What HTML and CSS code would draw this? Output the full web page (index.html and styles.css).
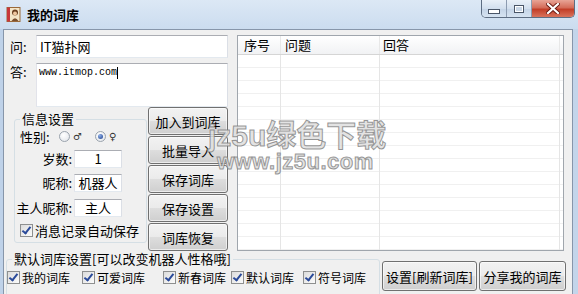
FILE: index.html
```html
<!DOCTYPE html>
<html lang="zh-CN">
<head>
    <meta charset="UTF-8">
    <title>我的词库</title>
    <link rel="stylesheet" href="styles.css">
</head>
<body>
    <div class="window">
        <div class="titlebar">
            <svg class="app-icon" width="15" height="15" viewBox="0 0 15 15">
                <rect x="1" y="0.5" width="13" height="14" fill="#f4e6c8" stroke="#9a6a3a"/>
                <rect x="1" y="0.5" width="3" height="14" fill="#c8383a"/>
                <circle cx="9" cy="5.5" r="3" fill="#6a4020"/>
                <circle cx="9" cy="6.5" r="2" fill="#f0c8a0"/>
                <path d="M5.5 14 Q9 8.5 12.5 14 Z" fill="#7a5030"/>
            </svg>
            <span class="title">我的词库</span>
            <div class="controls">
                <div class="ctl min"><span></span></div>
                <div class="ctl max"><span></span></div>
                <div class="ctl close">
                    <svg width="14" height="11" viewBox="0 0 14 11">
                        <path d="M2 1 L12 10 M12 1 L2 10" stroke="#6a1a12" stroke-width="4" stroke-linecap="square"/>
                        <path d="M2 1 L12 10 M12 1 L2 10" stroke="#fff" stroke-width="2.2" stroke-linecap="square"/>
                    </svg>
                </div>
            </div>
        </div>

        <div class="client">
            <div class="main">
                <div class="left">
                    <div class="qa-row">
                        <label>问:</label>
                        <div class="field ask">IT猫扑网</div>
                    </div>
                    <div class="qa-row answer-row">
                        <label>答:</label>
                        <div class="field answer">www.itmop.com<span class="caret"></span></div>
                    </div>
                    <div class="settings-row">
                        <fieldset class="info">
                            <legend>信息设置</legend>
                            <div class="gender">
                                <span class="gender-label">性别:</span>
                                <span class="radio"></span><span class="sex">♂</span>
                                <span class="radio checked"></span><span class="sex">♀</span>
                            </div>
                            <div class="info-row age">
                                <span class="info-label">岁数:</span>
                                <span class="value">1</span>
                            </div>
                            <div class="info-row nick">
                                <span class="info-label">昵称:</span>
                                <span class="value">机器人</span>
                            </div>
                            <div class="info-row owner">
                                <span class="info-label">主人昵称:</span>
                                <span class="value">主人</span>
                            </div>
                            <div class="check autosave"><span class="cb"></span>消息记录自动保存</div>
                        </fieldset>
                        <div class="buttons">
                            <button class="btn">加入到词库</button>
                            <button class="btn">批量导入</button>
                            <button class="btn">保存词库</button>
                            <button class="btn">保存设置</button>
                            <button class="btn">词库恢复</button>
                        </div>
                    </div>
                </div>

                <div class="list">
                    <div class="list-head">
                        <div class="col c1">序号</div>
                        <div class="col c2">问题</div>
                        <div class="col c3">回答</div>
                    </div>
                    <div class="list-body">
                        <div class="col c1"></div>
                        <div class="col c2"></div>
                        <div class="col c3"></div>
                    </div>
                </div>
            </div>

            <div class="bottom">
                <fieldset class="libs">
                    <legend>默认词库设置[可以改变机器人性格哦]</legend>
                    <div class="lib-list">
                        <div class="check"><span class="cb"></span>我的词库</div>
                        <div class="check"><span class="cb"></span>可爱词库</div>
                        <div class="check"><span class="cb"></span>新春词库</div>
                        <div class="check"><span class="cb"></span>默认词库</div>
                        <div class="check"><span class="cb"></span>符号词库</div>
                    </div>
                </fieldset>
                <button class="btn refresh">设置[刷新词库]</button>
                <button class="btn share">分享我的词库</button>
            </div>

            <!-- watermark of the download site -->
            <div class="watermark">
                <div class="wm-big">jz5u绿色下载</div>
                <div class="wm-url">www.jz5u.com</div>
            </div>
        </div>
    </div>
</body>
</html>
```

FILE: styles.css
```css
body {
    margin: 0;
    font-family: "Noto Sans CJK SC", "Liberation Sans", sans-serif;
    font-size: 12px;
    color: #000;
    background: #c5d7ec;
}
.window {
    width: 578px;
    height: 294px;
    overflow: hidden;
    display: flex;
    flex-direction: column;
    background: linear-gradient(to right, #bfd2e9, #cfdef0 60%, #c3d5ea);
}

/* Title bar */
.titlebar {
    height: 29px;
    flex-shrink: 0;
    display: flex;
    align-items: flex-start;
    background: linear-gradient(#dce8f5, #cbdcef);
}
.app-icon {
    margin: 7px 0 0 6px;
}
.title {
    margin: 7px 0 0 6px;
    font-weight: bold;
    font-size: 13px;
    line-height: 16px;
}
.controls {
    margin-left: auto;
    margin-right: 3px;
    display: flex;
    height: 17px;
    border: 1px solid #5d6d82;
    border-top: none;
    border-radius: 0 0 5px 5px;
    overflow: hidden;
}
.ctl {
    display: flex;
    align-items: center;
    justify-content: center;
    background: linear-gradient(#e9f0f8, #d2dfee 50%, #c3d3e6 51%, #d6e3f1);
    border-right: 1px solid #8c9bb0;
}
.min { width: 24px; }
.max { width: 24px; }
.min span {
    width: 10px;
    height: 3px;
    margin-top: 5px;
    background: #fff;
    border: 1px solid #4a5668;
}
.max span {
    width: 8px;
    height: 6px;
    border: 1px solid #4a5668;
    box-shadow: inset 0 0 0 1px #fff;
    background: #c9d7e7;
}
.close {
    width: 42px;
    border-right: none;
    background: linear-gradient(#e8a496, #d46c59 45%, #c23e28 55%, #d9735c);
}

/* Client area */
.client {
    flex: 1;
    margin: 0 5px 0 3px;
    padding-top: 5px;
    background: #f0f0f0;
    border: 1px solid #8796aa;
    border-bottom: none;
    position: relative;
}
.main {
    display: flex;
    height: 216px;
}
.left {
    width: 225px;
    flex-shrink: 0;
}
.qa-row {
    display: flex;
}
.qa-row label {
    width: 26px;
    padding-left: 6px;
    line-height: 23px;
    font-size: 13px;
}
.answer-row {
    margin-top: 5px;
}
.answer-row label {
    line-height: 17px;
}
.field {
    width: 192px;
    box-sizing: border-box;
    border: 1px solid #abadb3;
    border-color: #abadb3 #dbdfe6 #e3e9ef #e2e3ea;
    background: #fff;
}
.ask {
    height: 23px;
    line-height: 21px;
    padding-left: 3px;
    font-size: 13px;
}
.answer {
    height: 44px;
    padding: 3px 2px;
    font-family: "Liberation Mono", monospace;
    font-size: 10px;
    line-height: 12px;
}
.caret {
    display: inline-block;
    width: 1px;
    height: 12px;
    background: #000;
    vertical-align: top;
}

.settings-row {
    display: flex;
}
fieldset {
    margin: 0;
    padding: 0;
    border: 1px solid #d5dfe5;
    border-radius: 3px;
}
legend {
    padding: 0 2px;
    margin-left: 5px;
    line-height: 14px;
    font-size: 13px;
}
.info {
    margin: 5px 0 0 10px;
    width: 133px;
    height: 131px;
    box-sizing: border-box;
}
.gender {
    display: flex;
    align-items: center;
    height: 14px;
    margin-top: 3px;
    padding-left: 5px;
    font-size: 13px;
}
.gender-label {
    width: 39px;
}
.radio {
    width: 11px;
    height: 11px;
    box-sizing: border-box;
    border: 1px solid #9aa3ad;
    border-radius: 50%;
    background: radial-gradient(circle at 40% 35%, #fff, #dfe3e8);
    position: relative;
}
.radio.checked::after {
    content: '';
    position: absolute;
    left: 2px;
    top: 2px;
    width: 5px;
    height: 5px;
    border-radius: 50%;
    background: radial-gradient(circle at 35% 30%, #8fb0e8, #1c3f8c);
}
.sex {
    margin: 0 13px 0 3px;
    font-family: "DejaVu Sans", sans-serif;
    font-size: 10px;
    color: #333;
}
.info-row {
    display: flex;
    align-items: center;
    margin-top: 5px;
    font-size: 13px;
}
.age {
    margin-top: 6px;
}
.owner {
    margin-top: 6px;
}
.info-label {
    width: 57px;
    padding-right: 2px;
    display: flex;
    justify-content: flex-end;
    white-space: nowrap;
}
.value {
    width: 48px;
    height: 18px;
    box-sizing: border-box;
    border: 1px solid #abadb3;
    border-color: #abadb3 #dbdfe6 #e3e9ef #e2e3ea;
    background: #fff;
    text-align: center;
    line-height: 16px;
}

.check {
    display: flex;
    align-items: center;
    white-space: nowrap;
    font-size: 13px;
    line-height: 17px;
}
.cb {
    width: 13px;
    height: 13px;
    box-sizing: border-box;
    margin-right: 2px;
    border: 1px solid #8e8f8f;
    background: linear-gradient(135deg, #dcdcdc, #fbfbfb);
    position: relative;
}
.cb::after {
    content: '';
    position: absolute;
    left: 3px;
    top: 0;
    width: 3px;
    height: 7px;
    border: solid #2a4a9a;
    border-width: 0 2px 2px 0;
    transform: rotate(38deg);
}
.autosave {
    margin: 5px 0 0 5px;
}

.buttons {
    margin-left: 1px;
    display: flex;
    flex-direction: column;
    gap: 1px;
}
.btn {
    width: 80px;
    height: 28px;
    padding: 0;
    font-family: inherit;
    font-size: 13px;
    color: #000;
    border: 1px solid #707070;
    border-radius: 3px;
    background: linear-gradient(#f2f2f2, #ebebeb 48%, #dddddd 52%, #cfcfcf);
    box-shadow: inset 0 0 0 1px rgba(255, 255, 255, 0.6);
}

/* List view */
.list {
    margin-left: 8px;
    width: 327px;
    height: 216px;
    box-sizing: border-box;
    border: 1px solid #a0a6ad;
    background: #fff;
    display: flex;
    flex-direction: column;
}
.list-head {
    display: flex;
    height: 18px;
    border-bottom: 1px solid #d5d5d5;
    background: linear-gradient(#ffffff, #f1f2f4);
    font-size: 13px;
    line-height: 17px;
}
.list-body {
    flex: 1;
    display: flex;
    background: repeating-linear-gradient(#fff 0 12px, #f0f0f0 12px 13px);
}
.col {
    box-sizing: border-box;
    border-right: 1px solid #e5e5e5;
}
.list-head .col {
    border-right-color: #e8e8e8;
}
.c1 { width: 43px; padding-left: 6px; }
.c2 { width: 99px; padding-left: 4px; }
.c3 { width: 180px; padding-left: 3px; }

/* Bottom area */
.bottom {
    display: flex;
    align-items: flex-start;
}
.libs {
    margin: 1px 0 0 2px;
    width: 374px;
    height: 50px;
    box-sizing: border-box;
    border-right: 1px solid #d5dfe5;
}
.lib-list {
    display: grid;
    grid-template-columns: 75px 81px 68px 72px auto;
    margin-top: 4px;
}
.libs .check {
    font-size: 12px;
    line-height: 15px;
}
.refresh {
    width: 95px;
    height: 30px;
    margin: 10px 0 0 2px;
}
.share {
    width: 87px;
    height: 30px;
    margin: 10px 0 0 2px;
}

/* Site watermark lying over the window */
.watermark {
    position: absolute;
    left: 204px;
    top: 91px;
    font-family: "Liberation Sans", "Noto Sans CJK SC", sans-serif;
    font-weight: bold;
    color: rgba(222, 222, 222, 0.85);
    -webkit-text-stroke: 1px rgba(120, 120, 120, 0.75);
    pointer-events: none;
}
.wm-big {
    font-size: 30px;
    line-height: 30px;
}
.wm-url {
    margin-left: 9px;
    font-size: 22px;
    line-height: 22px;
    letter-spacing: 0.5px;
}
```
